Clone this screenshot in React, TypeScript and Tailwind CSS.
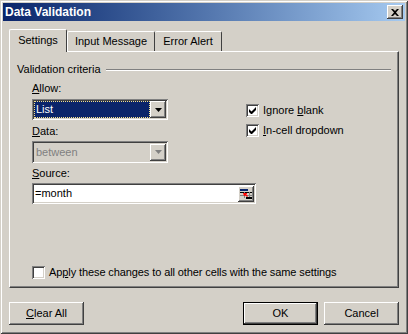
const font = "font-['Liberation_Sans',Arial,sans-serif]";

const raised =
  'shadow-[inset_-1px_-1px_0_#404040,inset_1px_1px_0_#ffffff,inset_-2px_-2px_0_#808080,inset_2px_2px_0_#d4d0c8]';
const sunken =
  'shadow-[inset_1px_1px_0_#808080,inset_-1px_-1px_0_#ffffff,inset_2px_2px_0_#404040,inset_-2px_-2px_0_#d4d0c8]';

function Arrow({ disabled }: { disabled?: boolean }) {
  return (
    <svg width="7" height="4" viewBox="0 0 7 4">
      <path d="M0 0h7L3.5 4z" fill={disabled ? '#808080' : '#000'} />
    </svg>
  );
}

function DropButton({ disabled }: { disabled?: boolean }) {
  return (
    <div
      className={`flex h-[17px] w-[16px] items-center justify-center bg-[#d4d0c8] ${raised}`}
    >
      <Arrow disabled={disabled} />
    </div>
  );
}

function Checkbox({ checked }: { checked?: boolean }) {
  return (
    <div className={`flex h-[13px] w-[13px] shrink-0 items-center justify-center bg-white ${sunken}`}>
      {checked && (
        <svg width="7" height="7" viewBox="0 0 7 7">
          <path d="M0 2v3l2 2h1l4-4V0L2.5 4.5z" fill="#000" />
        </svg>
      )}
    </div>
  );
}

function Button({ children, focused }: { children: React.ReactNode; focused?: boolean }) {
  return (
    <div
      className={`flex h-[23px] w-[75px] items-center justify-center bg-[#d4d0c8] ${
        focused
          ? 'shadow-[inset_-1px_-1px_0_#000,inset_1px_1px_0_#000,inset_-2px_-2px_0_#404040,inset_2px_2px_0_#ffffff,inset_-3px_-3px_0_#808080]'
          : raised
      }`}
    >
      {children}
    </div>
  );
}

export default function App() {
  return (
    <div
      className={`flex h-[334px] w-[408px] flex-col bg-[#d4d0c8] p-[3px] text-[11px] leading-[13px] text-black ${font} shadow-[inset_1px_1px_0_#d4d0c8,inset_-1px_-1px_0_#404040,inset_2px_2px_0_#ffffff,inset_-2px_-2px_0_#808080]`}
    >
      <div className="flex h-[18px] items-center justify-between bg-gradient-to-r from-[#0a246a] to-[#a6caf0] pl-[2px] pr-[2px]">
        <span className="text-[12px] font-bold text-white">Data Validation</span>
        <div className={`flex h-[14px] w-[16px] items-center justify-center bg-[#d4d0c8] ${raised}`}>
          <svg width="8" height="7" viewBox="0 0 8 7">
            <path d="M0 0h2l2 2 2-2h2L5 3.5 8 7H6L4 5 2 7H0l3-3.5z" fill="#000" />
          </svg>
        </div>
      </div>

      <div className="mt-[8px] flex h-[22px] items-end pl-[6px]">
        <div className="relative z-10 -mb-px flex h-[23px] w-[58px] items-center justify-center rounded-t-[2px] border-l border-r border-t border-l-white border-r-[#404040] border-t-white bg-[#d4d0c8] pb-px">
          Settings
        </div>
        <div className="flex h-[20px] w-[88px] items-center justify-center rounded-t-[2px] border-l border-r border-t border-l-white border-r-[#404040] border-t-white">
          Input Message
        </div>
        <div className="flex h-[20px] w-[67px] items-center justify-center rounded-t-[2px] border-r border-t border-r-[#404040] border-t-white">
          Error Alert
        </div>
      </div>

      <div className="mx-[6px] flex h-[237px] flex-col border-b border-l border-r border-t border-b-[#404040] border-l-white border-r-[#404040] border-t-white px-[7px] pb-[8px] pt-[11px] shadow-[inset_-1px_-1px_0_#808080]">
        <div className="flex items-center">
          <span>Validation criteria</span>
          <div className="ml-[5px] h-[2px] flex-1 border-b border-t border-b-white border-t-[#808080]" />
        </div>

        <div className="mt-[6px] flex pl-[15px]">
          <div className="flex w-[136px] flex-col">
            <span>
              <u>A</u>llow:
            </span>
            <div className={`mt-[4px] flex h-[21px] items-center bg-white p-[2px] ${sunken}`}>
              <div className="flex h-[17px] flex-1 items-center border border-dotted border-[#f5e08a] bg-[#0a246a] pl-px text-white">
                List
              </div>
              <DropButton />
            </div>
            <span className="mt-[5px]">
              <u>D</u>ata:
            </span>
            <div className={`mt-[3px] flex h-[22px] items-center bg-[#d4d0c8] p-[2px] ${sunken}`}>
              <div className="flex-1 pl-[2px] text-[#808080]">between</div>
              <DropButton disabled />
            </div>
          </div>

          <div className="ml-[78px] mt-[22px] flex flex-col gap-[7px]">
            <div className="flex items-center gap-[4px]">
              <Checkbox checked />
              <span>
                Ignore <u>b</u>lank
              </span>
            </div>
            <div className="flex items-center gap-[4px]">
              <Checkbox checked />
              <span>
                <u>I</u>n-cell dropdown
              </span>
            </div>
          </div>
        </div>

        <span className="mt-[4px] pl-[15px]">
          <u>S</u>ource:
        </span>
        <div
          className={`ml-[15px] mt-[3px] flex h-[21px] w-[224px] items-center bg-white py-[2px] pl-[3px] pr-[2px] ${sunken}`}
        >
          <span className="flex-1">=month</span>
          <div className={`flex h-[16px] w-[16px] items-center justify-center bg-[#d4d0c8] ${raised}`}>
            <svg width="12" height="10" viewBox="0 0 12 10">
              <rect x="0" y="0" width="8" height="2" fill="#0a246a" />
              <rect x="0" y="3" width="12" height="1" fill="#000" />
              <rect x="4" y="3" width="1" height="6" fill="#808080" />
              <rect x="9" y="3" width="1" height="6" fill="#808080" />
              <rect x="0" y="6" width="12" height="1" fill="#808080" />
              <rect x="6" y="8" width="6" height="2" fill="#000" />
              <path d="M3 4h4v1h-1l2 2-1 1-2-2v1H4z" fill="#ff0000" />
            </svg>
          </div>
        </div>

        <div className="flex-1" />

        <div className="flex items-center gap-[4px] pl-[15px]">
          <Checkbox />
          <span className="tracking-[-0.1px]">
            Ap<u>p</u>ly these changes to all other cells with the same settings
          </span>
        </div>
      </div>

      <div className="mt-[14px] flex px-[6px]">
        <Button>
          <span>
            <u>C</u>lear All
          </span>
        </Button>
        <div className="flex-1" />
        <Button focused>OK</Button>
        <div className="w-[6px]" />
        <Button>Cancel</Button>
      </div>
    </div>
  );
}
